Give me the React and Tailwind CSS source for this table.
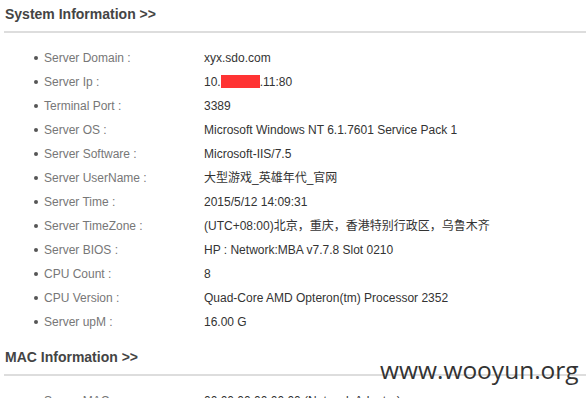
const systemRows = [
  ["Server Domain :", "xyx.sdo.com"],
  ["Server Ip :", "ip"],
  ["Terminal Port :", "3389"],
  ["Server OS :", "Microsoft Windows NT 6.1.7601 Service Pack 1"],
  ["Server Software :", "Microsoft-IIS/7.5"],
  ["Server UserName :", "大型游戏_英雄年代_官网"],
  ["Server Time :", "2015/5/12 14:09:31"],
  ["Server TimeZone :", "(UTC+08:00)北京，重庆，香港特别行政区，乌鲁木齐"],
  ["Server BIOS :", "HP : Network:MBA v7.7.8 Slot 0210"],
  ["CPU Count :", "8"],
  ["CPU Version :", "Quad-Core AMD Opteron(tm) Processor 2352"],
  ["Server upM :", "16.00 G"],
];

const macRows = [["Server MAC :", "00:00:00:00:00:00 (Network Adapter)"]];

const Row = ({ label, value }) => (
  <li className="flex items-center h-[24px]">
    <span className="ml-[34px] mr-[6px] w-[4px] h-[4px] rounded-full bg-[#555]" />
    <span className="w-[160px] text-[#777]">{label}</span>
    <span className="text-[#333]">
      {value === "ip" ? (
        <>
          10.<span className="inline-block w-[39px] h-[13px] bg-[#ff3333] align-[-2px]" />.11:80
        </>
      ) : (
        value
      )}
    </span>
  </li>
);

const Section = ({ title, rows }) => (
  <section>
    <h2 className="pl-[5px] pt-[4px] h-[31px] text-[14px] font-bold text-[#444]">
      {title}
    </h2>
    <div className="ml-[4px] h-[2px] bg-[#ddd]" />
    <ul className="pt-[13px] pb-[9px] text-[12px]">
      {rows.map(([label, value]) => (
        <Row key={label} label={label} value={value} />
      ))}
    </ul>
  </section>
);

export default function App() {
  return (
    <div
      className="relative h-[398px] w-[586px] overflow-hidden bg-white"
      style={{ fontFamily: '"Liberation Sans", Arial, "Noto Sans CJK SC", sans-serif' }}
    >
      <Section title="System Information >>" rows={systemRows} />
      <Section title="MAC Information >>" rows={macRows} />
      <div className="absolute left-[380px] top-[352px] text-[24.5px] text-[#333] font-['Open_Sans',sans-serif]">
        www.wooyun.org
      </div>
    </div>
  );
}
